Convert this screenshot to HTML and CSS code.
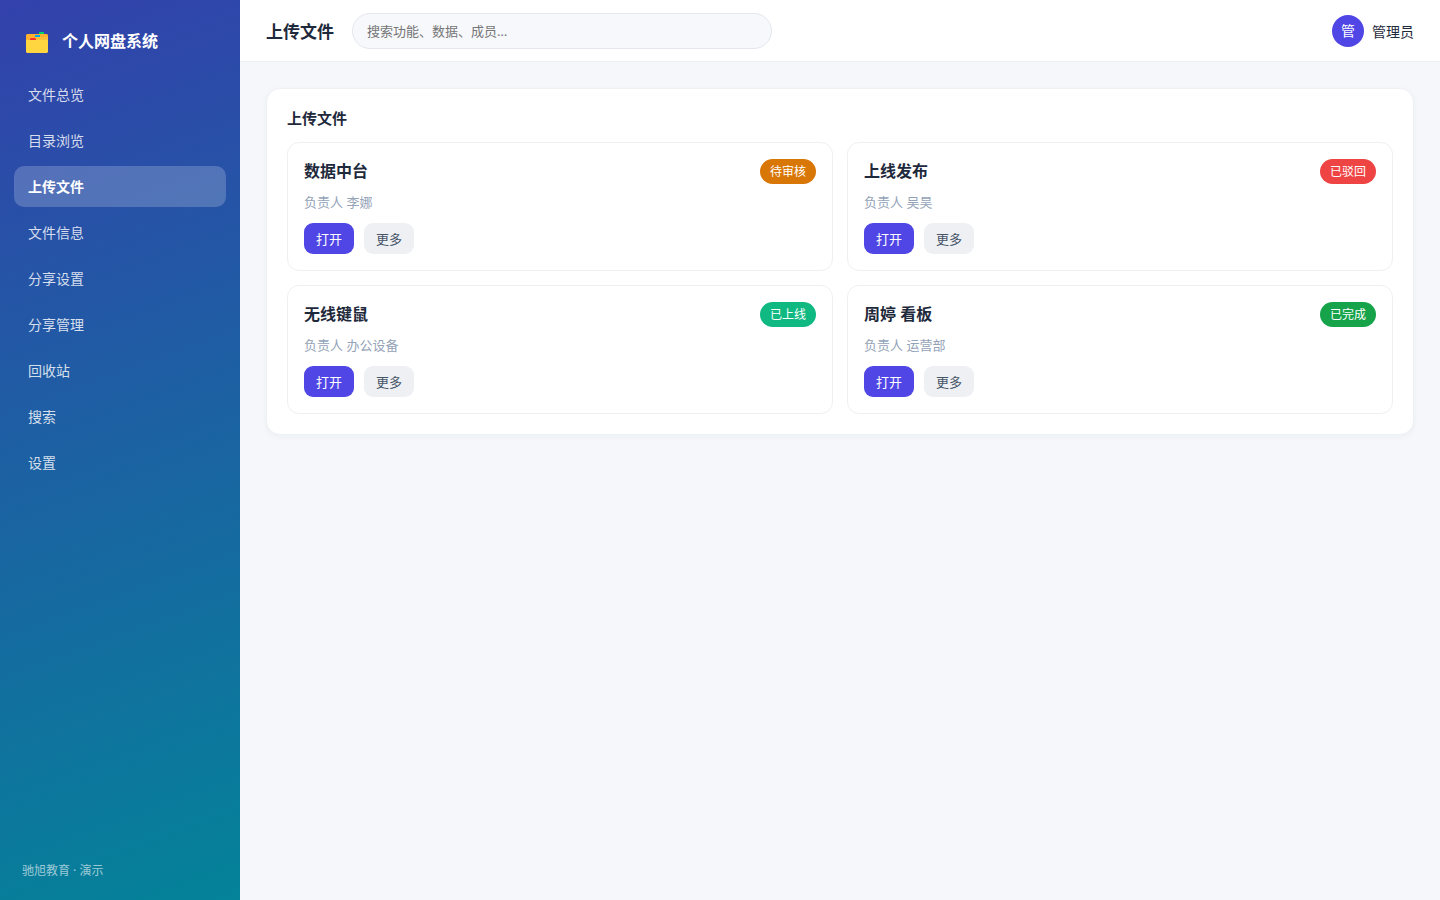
FILE: index.html
```html
<!DOCTYPE html>
<html lang="zh-CN">
<head>
    <meta charset="UTF-8">
    <meta name="viewport" content="width=device-width, initial-scale=1.0">
    <title>个人网盘系统 - 上传文件</title>
    <link rel="stylesheet" href="styles.css">
</head>
<body>
    <div class="app">
        <aside class="sidebar">
            <div class="brand">
                <svg class="logo" viewBox="0 0 22 22" aria-hidden="true">
                    <path fill="#ffb02e" d="M1 3h20l1 1v6H0V4z"/>
                    <path fill="#00d26a" d="M13 1h5v2h-5z"/>
                    <path fill="#fcbf38" d="M10 6h12v4H9z"/>
                    <path fill="#00a6ed" d="M9 4h5v2H9z"/>
                    <path fill="#ffd640" d="M0 9h22v12l-1 1H1l-1-1z"/>
                    <path fill="#f8312f" d="M5 7h4l1 1v1H4V8z"/>
                </svg>
                <span>个人网盘系统</span>
            </div>
            <nav class="menu">
                <a href="#">文件总览</a>
                <a href="#">目录浏览</a>
                <a href="#" class="active">上传文件</a>
                <a href="#">文件信息</a>
                <a href="#">分享设置</a>
                <a href="#">分享管理</a>
                <a href="#">回收站</a>
                <a href="#">搜索</a>
                <a href="#">设置</a>
            </nav>
            <div class="copyright">驰旭教育 · 演示</div>
        </aside>

        <div class="main">
            <header class="topbar">
                <h1>上传文件</h1>
                <input type="search" class="search" placeholder="搜索功能、数据、成员…" aria-label="搜索">
                <div class="user">
                    <span class="avatar">管</span>
                    <span>管理员</span>
                </div>
            </header>

            <main class="content">
                <section class="panel">
                    <h2>上传文件</h2>
                    <div class="cards">
                        <article class="card">
                            <div class="card-head">
                                <h3>数据中台</h3>
                                <span class="badge pending">待审核</span>
                            </div>
                            <p>负责人 李娜</p>
                            <div class="actions">
                                <button type="button" class="btn primary">打开</button>
                                <button type="button" class="btn">更多</button>
                            </div>
                        </article>
                        <article class="card">
                            <div class="card-head">
                                <h3>上线发布</h3>
                                <span class="badge rejected">已驳回</span>
                            </div>
                            <p>负责人 吴昊</p>
                            <div class="actions">
                                <button type="button" class="btn primary">打开</button>
                                <button type="button" class="btn">更多</button>
                            </div>
                        </article>
                        <article class="card">
                            <div class="card-head">
                                <h3>无线键鼠</h3>
                                <span class="badge online">已上线</span>
                            </div>
                            <p>负责人 办公设备</p>
                            <div class="actions">
                                <button type="button" class="btn primary">打开</button>
                                <button type="button" class="btn">更多</button>
                            </div>
                        </article>
                        <article class="card">
                            <div class="card-head">
                                <h3>周婷 看板</h3>
                                <span class="badge done">已完成</span>
                            </div>
                            <p>负责人 运营部</p>
                            <div class="actions">
                                <button type="button" class="btn primary">打开</button>
                                <button type="button" class="btn">更多</button>
                            </div>
                        </article>
                    </div>
                </section>
            </main>
        </div>
    </div>
</body>
</html>
```
FILE: styles.css
```css
* {
    box-sizing: border-box;
    margin: 0;
    padding: 0;
}

body {
    font-family: "Noto Sans", "Noto Sans CJK SC", sans-serif;
    font-size: 14px;
    color: #1e293b;
    background: #f5f7fb;
}

.app {
    display: flex;
    min-height: 100vh;
}

/* sidebar */
.sidebar {
    display: flex;
    flex-direction: column;
    flex-shrink: 0;
    width: 240px;
    padding: 20px 14px;
    color: #fff;
    background: linear-gradient(160deg, #3341ac, #048399);
}

.brand {
    display: flex;
    align-items: center;
    gap: 14px;
    padding: 0 12px;
    height: 40px;
    margin-bottom: 14px;
    font-size: 16px;
    font-weight: 700;
}

.logo {
    width: 22px;
    height: 22px;
    margin-top: 4px;
}

.menu {
    display: flex;
    flex-direction: column;
    gap: 5px;
}

.menu a {
    padding: 10px 14px;
    line-height: 21px;
    border-radius: 10px;
    color: rgba(255, 255, 255, 0.82);
    text-decoration: none;
}

.menu a.active {
    color: #fff;
    font-weight: 700;
    background: rgba(255, 255, 255, 0.2);
}

.copyright {
    margin-top: auto;
    padding: 0 8px;
    font-size: 12px;
    line-height: 18px;
    color: rgba(255, 255, 255, 0.6);
}

/* top bar */
.main {
    flex: 1;
    min-width: 0;
}

.topbar {
    display: flex;
    align-items: center;
    gap: 18px;
    height: 62px;
    padding: 0 26px;
    background: #fff;
    border-bottom: 1px solid #eef0f4;
}

.topbar h1 {
    font-size: 17px;
    font-weight: 700;
}

.search {
    width: 420px;
    height: 36px;
    padding: 0 14px;
    font-family: inherit;
    font-size: 13px;
    color: #1e293b;
    background: #f7f8fc;
    border: 1px solid #e5e7ef;
    border-radius: 18px;
    outline: none;
}

.search::placeholder {
    color: #757575;
}

.user {
    display: flex;
    align-items: center;
    gap: 8px;
    margin-left: auto;
}

.avatar {
    width: 32px;
    height: 32px;
    line-height: 32px;
    text-align: center;
    color: #fff;
    background: #4f46e5;
    border-radius: 50%;
}

/* content */
.content {
    padding: 26px;
}

.panel {
    padding: 20px;
    background: #fff;
    border: 1px solid #eef0f4;
    border-radius: 14px;
    box-shadow: 0 2px 6px rgba(30, 41, 59, 0.04);
}

.panel h2 {
    margin-bottom: 14px;
    font-size: 15px;
    line-height: 19px;
}

.cards {
    display: grid;
    grid-template-columns: repeat(2, 1fr);
    gap: 14px;
}

.card {
    padding: 16px;
    border: 1px solid #eef0f4;
    border-radius: 12px;
}

.card-head {
    display: flex;
    align-items: center;
    justify-content: space-between;
}

.card h3 {
    font-size: 16px;
    line-height: 25px;
}

.card p {
    margin: 8px 0 11px;
    font-size: 13px;
    line-height: 20px;
    color: #94a3b8;
}

.badge {
    padding: 0 10px;
    font-size: 12px;
    line-height: 25px;
    color: #fff;
    border-radius: 13px;
}

.pending {
    background: #d97706;
}

.rejected {
    background: #ef4444;
}

.online {
    background: #10b981;
}

.done {
    background: #16a34a;
}

.actions {
    display: flex;
    gap: 10px;
}

.btn {
    height: 31px;
    padding: 0 12px;
    font-family: inherit;
    font-size: 13px;
    color: #475569;
    background: #eef0f4;
    border: none;
    border-radius: 9px;
    cursor: pointer;
}

.btn.primary {
    color: #fff;
    background: #4f46e5;
}
```
